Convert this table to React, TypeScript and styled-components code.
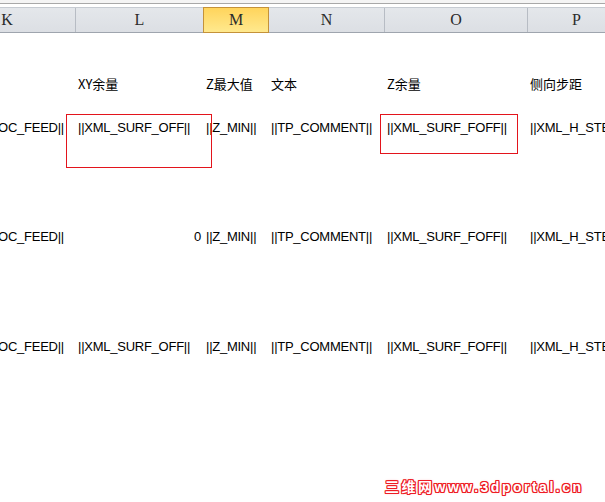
import React from "react";
import styled, { createGlobalStyle } from "styled-components";

const GlobalStyle = createGlobalStyle`
  html, body { margin: 0; padding: 0; background: #ffffff; overflow: hidden; }
`;

const COLS = "137px 128px 65px 116px 143px 98px";

const Window = styled.div`
  position: relative;
  width: 605px;
  height: 502px;
  overflow: hidden;
  background: #ffffff;
`;

const TopStrip = styled.div`
  height: 3px;
  background: #f4f4f4;
  border-bottom: 1px solid #a8a8a8;
`;

const Sheet = styled.div`
  margin-top: 3px;
  margin-left: -61px;
`;

const HeaderRow = styled.div`
  display: grid;
  grid-template-columns: ${COLS};
  height: 24px;
  border-top: 1px solid #c6cbd2;
  border-bottom: 1px solid #9fa5ae;
  background: linear-gradient(#e4e7eb, #dcdfe4);
`;

const HeaderCell = styled.div<{ $active?: boolean }>`
  display: flex;
  align-items: center;
  justify-content: center;
  font-family: "Liberation Serif", "DejaVu Serif", serif;
  font-size: 16px;
  color: #2b2b2b;
  border-right: 1px solid #b7bcc4;
  ${(p) =>
    p.$active &&
    `
    margin: -1px 0 -1px -1px;
    border: 1px solid #c4923a;
    background: linear-gradient(#ffd45c, #ffe98e);
  `}
`;

const Row = styled.div<{ $h: number; $pt: number }>`
  display: grid;
  grid-template-columns: ${COLS};
  height: ${(p) => p.$h}px;
  padding-top: ${(p) => p.$pt}px;
  box-sizing: border-box;
  align-items: start;
`;

const Cell = styled.div<{ $right?: boolean; $cjk?: boolean }>`
  font-family: ${(p) =>
    p.$cjk
      ? `"Noto Sans CJK SC", "Noto Sans", sans-serif`
      : `"Liberation Sans", Arial, sans-serif`};
  font-size: 13px;
  letter-spacing: ${(p) => (p.$cjk ? "0" : "-0.25px")};
  line-height: ${(p) => (p.$cjk ? "18px" : "16px")};
  margin-top: ${(p) => (p.$cjk ? "-1px" : "0")};
  color: #000;
  white-space: nowrap;
  padding: ${(p) => (p.$right ? "0 12px 0 0" : "0 0 0 2px")};
  text-align: ${(p) => (p.$right ? "right" : "left")};
`;

const NumCell = styled(Cell)`
  padding: 0 3px 0 0;
  text-align: right;
`;

const Marker = styled.div<{ $x: number; $y: number; $w: number; $h: number }>`
  position: absolute;
  left: ${(p) => p.$x}px;
  top: ${(p) => p.$y}px;
  width: ${(p) => p.$w}px;
  height: ${(p) => p.$h}px;
  border: 1px solid #e3141c;
  box-sizing: border-box;
  pointer-events: none;
`;

const Watermark = styled.div`
  position: absolute;
  left: 385px;
  top: 479px;
  font-family: "Liberation Sans", "Noto Sans CJK SC", sans-serif;
  font-weight: bold;
  font-size: 14px;
  line-height: 16px;
  letter-spacing: 2.5px;
  color: #ffffff;
  white-space: nowrap;
  text-shadow: 1px 0 0 #ee1c24, -1px 0 0 #ee1c24, 0 1px 0 #ee1c24,
    0 -1px 0 #ee1c24, 1px 1px 0 #ee1c24, -1px -1px 0 #ee1c24,
    1px -1px 0 #ee1c24, -1px 1px 0 #ee1c24, 0 0 3px #ff9aa0;
`;

const columns = ["K", "L", "M", "N", "O", "P"];

type DataRow = { k: string; l: string; lNum?: boolean; m: string; n: string; o: string; p: string };

const rows: { h: number; data: DataRow }[] = [
  { h: 109, data: { k: "OC_FEED||", l: "||XML_SURF_OFF||", m: "||Z_MIN||", n: "||TP_COMMENT||", o: "||XML_SURF_FOFF||", p: "||XML_H_STEP||" } },
  { h: 110, data: { k: "OC_FEED||", l: "0", lNum: true, m: "||Z_MIN||", n: "||TP_COMMENT||", o: "||XML_SURF_FOFF||", p: "||XML_H_STEP||" } },
  { h: 110, data: { k: "OC_FEED||", l: "||XML_SURF_OFF||", m: "||Z_MIN||", n: "||TP_COMMENT||", o: "||XML_SURF_FOFF||", p: "||XML_H_STEP||" } },
];

export default function App() {
  return (
    <Window>
      <GlobalStyle />
      <TopStrip />
      <Sheet>
        <HeaderRow>
          {columns.map((c) => (
            <HeaderCell key={c} $active={c === "M"}>
              {c}
            </HeaderCell>
          ))}
        </HeaderRow>
        <Row $h={73} $pt={43}>
          <Cell $cjk></Cell>
          <Cell $cjk>XY余量</Cell>
          <Cell $cjk>Z最大值</Cell>
          <Cell $cjk>文本</Cell>
          <Cell $cjk>Z余量</Cell>
          <Cell $cjk>侧向步距</Cell>
        </Row>
        {rows.map((r, i) => (
          <Row key={i} $h={r.h} $pt={14}>
            <Cell $right>{r.data.k}</Cell>
            {r.data.lNum ? <NumCell>{r.data.l}</NumCell> : <Cell>{r.data.l}</Cell>}
            <Cell>{r.data.m}</Cell>
            <Cell>{r.data.n}</Cell>
            <Cell>{r.data.o}</Cell>
            <Cell>{r.data.p}</Cell>
          </Row>
        ))}
      </Sheet>
      <Marker $x={66} $y={114} $w={146} $h={54} />
      <Marker $x={380} $y={114} $w={138} $h={40} />
      <Watermark>三维网www.3dportal.cn</Watermark>
    </Window>
  );
}
